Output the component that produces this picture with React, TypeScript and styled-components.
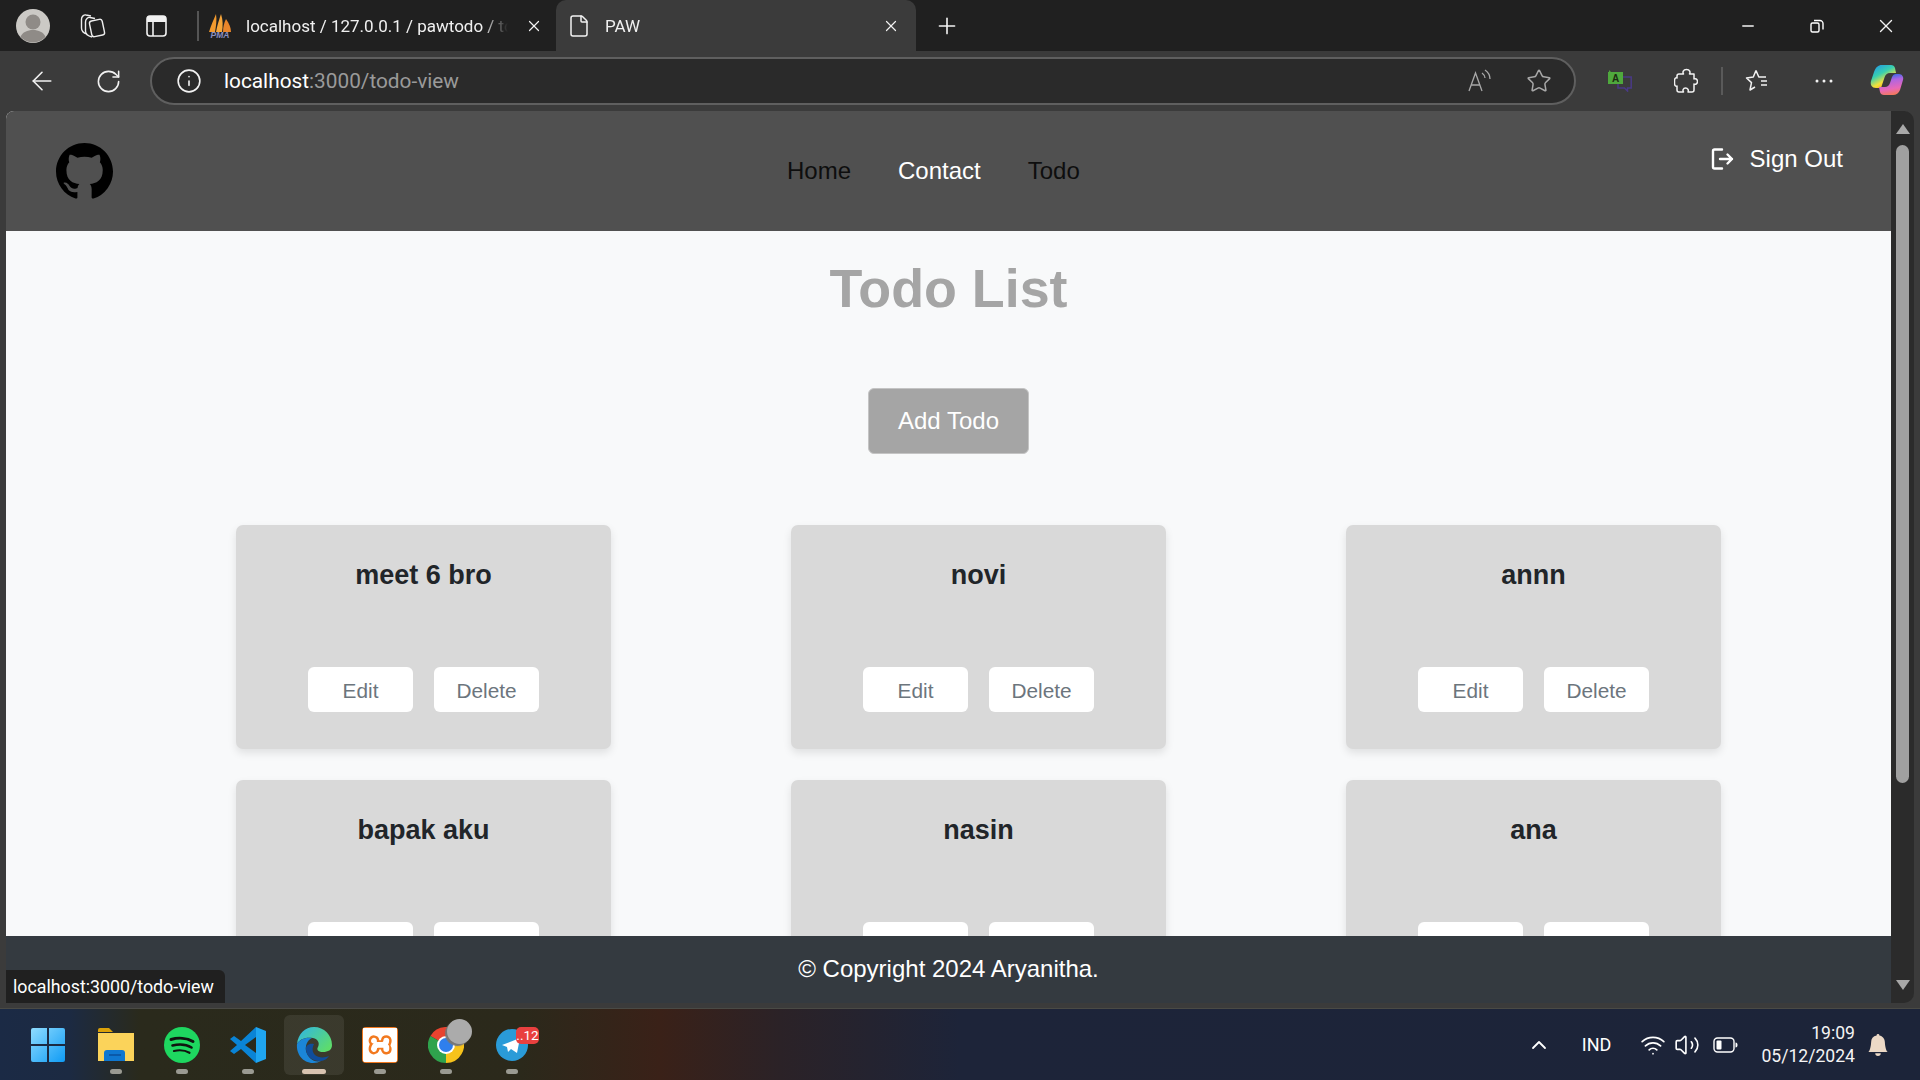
import React from "react";
import styled, { createGlobalStyle } from "styled-components";
import { ArrowLeft, ChevronUp, File, Info, Minus, Plus, RotateCw, Star, Volume2, Wifi, X } from "lucide-react";
import { BsBellFill, BsGithub } from "react-icons/bs";
import { SiXampp } from "react-icons/si";

const Global = createGlobalStyle`
  html, body { margin: 0; padding: 0; background: #202020; }
  * { box-sizing: border-box; }
`;

const UI = `Roboto, "Noto Sans", sans-serif`;
const WEB = `"Liberation Sans", Arial, sans-serif`;

const Frame = styled.div`
  width: 1920px;
  height: 1080px;
  overflow: hidden;
  display: flex;
  flex-direction: column;
  background: #3b3b3b;
  font-family: ${UI};
`;

const TabStrip = styled.div`
  height: 51px;
  flex: none;
  display: flex;
  align-items: center;
  background: #202020;
  color: #fff;
`;

const Slot = styled.div<{ $w: number }>`
  width: ${(p) => p.$w}px;
  height: 100%;
  flex: none;
  display: flex;
  align-items: center;
  justify-content: center;
  color: #f2f2f2;
`;

const StripDivider = styled.div`
  width: 2px;
  height: 30px;
  margin-left: 5px;
  flex: none;
  background: #555;
`;

const InactiveTab = styled.div`
  width: 357px;
  height: 100%;
  flex: none;
  display: flex;
  align-items: center;
  padding-left: 9px;
`;

const TabTitle = styled.span`
  font-size: 17px;
  color: #f0f0f0;
  white-space: nowrap;
  overflow: hidden;
  flex: none;
  -webkit-mask-image: linear-gradient(90deg, #000 90%, transparent 100%);
  mask-image: linear-gradient(90deg, #000 90%, transparent 100%);
`;

const InactiveTitle = styled(TabTitle)`
  width: 262px;
  margin: 0 15px 0 14px;
`;

const ActiveTab = styled.div`
  width: 360px;
  height: 100%;
  flex: none;
  display: flex;
  align-items: center;
  padding-left: 11px;
  background: #3b3b3b;
  border-radius: 10px 10px 0 0;
`;

const ActiveTitle = styled(TabTitle)`
  width: 275px;
  margin-left: 14px;
`;

const WindowControls = styled.div`
  margin-left: auto;
  height: 100%;
  display: flex;
`;

const Toolbar = styled.div`
  height: 60px;
  flex: none;
  display: flex;
  align-items: center;
  background: #3b3b3b;
`;

const AddressBar = styled.div`
  width: 1426px;
  height: 48px;
  margin-left: 18px;
  flex: none;
  display: flex;
  align-items: center;
  border: 2px solid #5f5f5f;
  border-radius: 24px;
  background: #2a2a2a;
  padding-left: 24px;
`;

const Url = styled.div`
  margin-left: 22px;
  font-size: 20.8px;
  color: #fff;
  span { color: #9a9a9a; }
`;

const AddressEnd = styled.div`
  margin-left: auto;
  height: 100%;
  display: flex;
  align-items: center;
  padding-right: 6px;
`;

const ToolDivider = styled.div`
  width: 2px;
  height: 28px;
  margin: 0 2px 0 14px;
  flex: none;
  background: #5a5a5a;
`;

const ViewportRow = styled.div`
  height: 892px;
  flex: none;
  display: flex;
  padding: 0 6px;
`;

const Page = styled.div`
  flex: 1;
  min-width: 0;
  position: relative;
  display: flex;
  flex-direction: column;
  background: #f8f9fa;
  font-family: ${WEB};
  border-top-left-radius: 8px;
  overflow: hidden;
`;

const Scrollbar = styled.div`
  width: 23px;
  flex: none;
  display: flex;
  flex-direction: column;
  align-items: center;
  background: #2b2b2b;
  border-radius: 0 10px 10px 0;
  padding: 13px 0 13px;
`;

const ScrollUp = styled.div`
  width: 0;
  height: 0;
  border-left: 7px solid transparent;
  border-right: 7px solid transparent;
  border-bottom: 10px solid #a8a8a8;
`;

const ScrollDown = styled.div`
  width: 0;
  height: 0;
  margin-top: auto;
  border-left: 7px solid transparent;
  border-right: 7px solid transparent;
  border-top: 10px solid #a8a8a8;
`;

const ScrollThumb = styled.div`
  width: 13px;
  height: 638px;
  margin-top: 11px;
  border-radius: 7px;
  background: #a0a0a0;
`;

const NavBar = styled.nav`
  height: 120px;
  flex: none;
  display: flex;
  align-items: center;
  padding: 0 48px 0 49px;
  background: #505050;
`;

const Logo = styled.div`
  width: 58px;
  height: 58px;
  flex: none;
  color: #000;
  display: flex;
  align-items: center;
  justify-content: center;
`;

const NavLinks = styled.div`
  margin-left: 674px;
  display: flex;
  gap: 47px;
`;

const NavLink = styled.a<{ $active?: boolean }>`
  font-size: 24px;
  line-height: 28px;
  color: ${(p) => (p.$active ? "#fff" : "#0e0e0e")};
`;

const SignOut = styled.div`
  margin-left: auto;
  align-self: flex-start;
  margin-top: 34px;
  display: flex;
  align-items: center;
  gap: 16px;
  font-size: 24px;
  line-height: 28px;
  color: #fff;
`;

const Content = styled.main`
  flex: 1;
  min-height: 0;
  overflow: hidden;
  display: flex;
  flex-direction: column;
  align-items: center;
  padding-top: 25px;
`;

const Heading = styled.h1`
  margin: 0 0 68px;
  font-size: 53.8px;
  line-height: 64px;
  font-weight: 700;
  color: #a5a5a5;
`;

const AddButton = styled.button`
  width: 161px;
  height: 66px;
  flex: none;
  margin-bottom: 71px;
  border: 1px solid #c4c4c4;
  border-radius: 6px;
  background: #a5a5a5;
  color: #fff;
  font-family: ${WEB};
  font-size: 24px;
`;

const CardGrid = styled.div`
  align-self: flex-start;
  margin-left: 230px;
  flex: none;
  display: grid;
  grid-template-columns: repeat(3, 375px);
  column-gap: 180px;
  row-gap: 31px;
`;

const Card = styled.article`
  height: 224px;
  display: flex;
  flex-direction: column;
  align-items: center;
  padding-top: 34px;
  background: #d9d9d9;
  border-radius: 7px;
  box-shadow: 0 4px 8px rgba(0, 0, 0, 0.1);
`;

const CardTitle = styled.h3`
  margin: 0;
  font-size: 27px;
  line-height: 32px;
  font-weight: 700;
  color: #212529;
`;

const CardActions = styled.div`
  margin-top: 76px;
  display: flex;
  gap: 21px;
`;

const CardButton = styled.button`
  width: 105px;
  height: 45px;
  border: none;
  border-radius: 6px;
  padding: 2px 0 0;
  background: #fff;
  color: #6c757d;
  font-family: ${WEB};
  font-size: 20.8px;
`;

const Footer = styled.footer`
  height: 67px;
  flex: none;
  display: flex;
  align-items: center;
  justify-content: center;
  padding-bottom: 2px;
  background: #343a40;
  color: #fff;
  font-size: 24px;
`;

const StatusBubble = styled.div`
  position: absolute;
  left: 0;
  bottom: 0;
  width: 219px;
  height: 33px;
  display: flex;
  align-items: center;
  padding-left: 7px;
  background: #202020;
  border-radius: 0 6px 0 0;
  color: #fff;
  font-family: ${UI};
  font-size: 17.8px;
`;

const BottomEdge = styled.div`
  height: 5px;
  flex: none;
  background: #3b3b3b;
`;

const Taskbar = styled.div`
  height: 72px;
  flex: none;
  display: flex;
  align-items: center;
  padding: 0 31px 0 17px;
  border-top: 1px solid #4a4a45;
  background: linear-gradient(90deg, #1b2a45 0, #1c2a42 70px, #2a2a1c 140px, #2b291b 520px, #3a2118 660px, #2b2227 780px, #1d2439 960px, #1c2439 100%);
`;

const TaskSlot = styled.div<{ $active?: boolean }>`
  width: 60px;
  height: 60px;
  margin: 0 3px;
  flex: none;
  position: relative;
  display: flex;
  align-items: center;
  justify-content: center;
  border-radius: 6px;
  background: ${(p) => (p.$active ? "rgba(255,255,255,0.08)" : "transparent")};
`;

const StartSlot = styled(TaskSlot)`
  padding-right: 4px;
`;

const Indicator = styled.div<{ $active?: boolean }>`
  position: absolute;
  left: 50%;
  bottom: 1px;
  width: ${(p) => (p.$active ? 24 : 12)}px;
  height: 5px;
  transform: translateX(-50%);
  border-radius: 3px;
  background: ${(p) => (p.$active ? "#d8c3b0" : "#9a9a92")};
`;

const GreyBlob = styled.div`
  position: absolute;
  left: 31px;
  top: 4px;
  width: 25px;
  height: 25px;
  border-radius: 50%;
  background: #ababab;
  box-shadow: -2px 2px 1px #777;
`;

const CountBadge = styled.div`
  position: absolute;
  left: 34px;
  top: 12px;
  width: 23px;
  height: 17px;
  display: flex;
  align-items: center;
  justify-content: center;
  border-radius: 5px;
  background: #e9403f;
  color: #fff;
  font-size: 13.5px;
`;

const Tray = styled.div`
  margin-left: auto;
  display: flex;
  align-items: center;
  color: #fff;
`;

const TrayIcon = styled.div<{ $left: number }>`
  margin-left: ${(p) => p.$left}px;
  display: flex;
  align-items: center;
`;

const TrayLang = styled.div`
  margin-left: 31px;
  font-size: 18px;
`;

const Clock = styled.div`
  margin-left: 23px;
  text-align: right;
  font-size: 17.6px;
  line-height: 23px;
  color: #f4f4f4;
`;

const Icon = styled.svg`
  display: block;
  flex: none;
`;

const Avatar = () => (
  <Icon width="34" height="34" viewBox="0 0 34 34">
    <circle cx="17" cy="17" r="17" fill="#cbc9c5" />
    <circle cx="17" cy="13" r="7.5" fill="#8f8b87" />
    <path d="M4.5 28c2-5 7-7 12.500-7s10.500 2 12.500 7a17 17 0 0 1-25 0z" fill="#8f8b87" />
  </Icon>
);

const Workspaces = () => (
  <Icon width="26" height="26" viewBox="0 0 26 26" fill="none" stroke="#eee" strokeWidth="1.4">
    <path d="M7 21C3 20 1.500 18 1.500 15V6C1.500 3.500 4 1.500 6 2l5 1" />
    <path d="M12 24C8 23 5.500 21 5.500 18V9C5.500 6 8 4 10 4.500l5 1" />
    <rect x="10.500" y="7" width="13" height="16" rx="2.500" transform="rotate(-12 17 15)" />
  </Icon>
);

const VerticalTabs = () => (
  <Icon width="21" height="22" viewBox="0 0 21 22">
    <rect x="1" y="1" width="19" height="20" rx="3" fill="none" stroke="#f2f2f2" strokeWidth="1.600" />
    <path d="M1 4a3 3 0 0 1 3-3h13a3 3 0 0 1 3 3v3H1z" fill="#f2f2f2" />
    <path d="M7 7v14" stroke="#f2f2f2" strokeWidth="1.600" />
  </Icon>
);

const PmaFavicon = () => (
  <Icon width="24" height="24" viewBox="0 0 24 24">
    <path d="M1 18C3 11 6 5 8 0c1 6 0 12-1 18z" fill="#f29a2e" />
    <path d="M8 18c1-6 3-12 5-18 2 6 2 12 1 18z" fill="#f7a63a" />
    <path d="M15 18c0-5 1-9 3-13 3 4 5 9 5 13z" fill="#e9852a" />
    <text x="12" y="23.500" textAnchor="middle" fontSize="8.500" fontWeight="700" fontStyle="italic" fontFamily="Liberation Sans" fill="#8a8fc0">PMA</text>
  </Icon>
);

const Restore = () => (
  <Icon width="16" height="16" viewBox="0 0 16 16" fill="none" stroke="#fff" strokeWidth="1.400">
    <rect x="2" y="5" width="8" height="9" rx="1.500" />
    <path d="M5 2.500h6a3 3 0 0 1 3 3v6" />
  </Icon>
);

const ReadAloud = () => (
  <Icon width="26" height="26" viewBox="0 0 26 26" fill="none" stroke="#a8a8a8" strokeWidth="1.300">
    <path d="M2 23 8.500 5 15 23M4.500 17h8" />
    <path d="M15 5c2 1.500 3 3 3 5M18 2c3 2 5 5 5 9" />
  </Icon>
);

const TranslateIcon = () => (
  <Icon width="24" height="22" viewBox="0 0 24 22">
    <path d="M10 7h13.200v11h-3.700v3l-3-3H10z" fill="none" stroke="#4a3a86" strokeWidth="1.500" />
    <path d="M0 2h1V0l2 2h12v12H0z" fill="#4fa83d" />
    <text x="7.500" y="12" textAnchor="middle" fontSize="10" fontWeight="700" fontFamily="Liberation Sans" fill="#1c2a12">A</text>
  </Icon>
);

const PuzzleIcon = () => (
  <Icon width="24" height="26" viewBox="0 0 24 26" fill="none" stroke="#f2f2f2" strokeWidth="1.500" strokeLinejoin="round">
    <path d="M5 6h4.500C8.500 4.500 9 1.500 12.500 1.500S16.500 4.500 15.500 6H20v5c1.200-.8 3.500 0 3.500 2.500S21.200 16.800 20 16v6c0 1-1 2-2 2h-4c.8-1.500 0-4-2.500-4S8.500 22.500 9.500 24H5c-1 0-2-1-2-2v-4c-1.200.8-2.500-.5-2.500-2.500v-3C.5 10.500 1.800 9.200 3 10V8c0-1 1-2 2-2z" />
  </Icon>
);

const FavStar = () => (
  <Icon width="26" height="26" viewBox="0 0 26 26" fill="none" stroke="#f2f2f2" strokeWidth="1.500" strokeLinejoin="round">
    <path d="M11 2.500 13.800 9H21M16 13h6M16 17h6M11 2.500 8.300 9 1.500 10l5 4.600L5 22l5-3" />
  </Icon>
);

const Dots = () => (
  <Icon width="20" height="4" viewBox="0 0 20 4" fill="#f2f2f2">
    <circle cx="3" cy="2" r="1.500" />
    <circle cx="10" cy="2" r="1.500" />
    <circle cx="17" cy="2" r="1.500" />
  </Icon>
);

const Copilot = () => (
  <Icon width="34" height="34" viewBox="0 0 34 34">
    <defs>
      <linearGradient id="cpA" x1="0" y1="0" x2="0.600" y2="1">
        <stop offset="0" stopColor="#1f8ff0" />
        <stop offset="0.450" stopColor="#38d0b0" />
        <stop offset="0.750" stopColor="#f3e13a" />
        <stop offset="1" stopColor="#f5a623" />
      </linearGradient>
      <linearGradient id="cpB" x1="0.400" y1="0" x2="0.600" y2="1">
        <stop offset="0" stopColor="#2a6bea" />
        <stop offset="0.300" stopColor="#b065e0" />
        <stop offset="0.700" stopColor="#e868b8" />
        <stop offset="1" stopColor="#f47a55" />
      </linearGradient>
    </defs>
    <path d="M12 1h9c2 0 3.500 1 4 3l1 5h-6c-3 0-4.500 1.500-5.500 4.500L11 24H6c-4 0-6-3-5-7l3-9c2-5 4-7 8-7z" fill="url(#cpA)" />
    <path d="M9 23h6c2.500 0 4-1.500 5-4l2-6c1-2 2-3 4-3h3c3 0 5 3 4 6l-3 10c-1 3-4 5-7 5H14c-2 0-3.500-1-4-3z" fill="url(#cpB)" />
  </Icon>
);

const SignOutIcon = () => (
  <Icon width="23" height="24" viewBox="0 0 23 24" fill="none" stroke="#fff" strokeWidth="2.400" strokeLinecap="round" strokeLinejoin="round">
    <path d="M11 2.500H3.500a1.500 1.500 0 0 0-1.500 1.500v16a1.500 1.500 0 0 0 1.500 1.500H11" />
    <path d="M9 12h12M16.500 7.500 21 12l-4.500 4.500" />
  </Icon>
);

const WindowsLogo = () => (
  <Icon width="36" height="36" viewBox="0 0 36 36">
    <defs>
      <linearGradient id="win" x1="0" y1="0" x2="1" y2="1">
        <stop offset="0" stopColor="#8fdcff" />
        <stop offset="1" stopColor="#0f9bf5" />
      </linearGradient>
    </defs>
    <path d="M1 3a2 2 0 0 1 2-2h14v16H1zM19 1h14a2 2 0 0 1 2 2v14H19zM1 19h16v16H3a2 2 0 0 1-2-2zM19 19h16v14a2 2 0 0 1-2 2H19z" fill="url(#win)" />
  </Icon>
);

const FolderIcon = () => (
  <Icon width="36" height="34" viewBox="0 0 36 34">
    <path d="M0 2a2 2 0 0 1 2-2h9l4 4H0z" fill="#dca20a" />
    <path d="M0 5h36v28H0z" fill="#fbd35a" />
    <path d="M6 33V25a3 3 0 0 1 3-3h15a3 3 0 0 1 3 3v8z" fill="#0f77d0" />
    <path d="M11 27h12" stroke="#0a4f9c" strokeWidth="1.500" />
  </Icon>
);

const SpotifyIcon = () => (
  <Icon width="36" height="36" viewBox="0 0 36 36" fill="none" stroke="#10130f" strokeLinecap="round">
    <circle cx="18" cy="18" r="18" fill="#1ed760" stroke="none" />
    <path d="M7 12.500c7-2 16-1.500 22 2" strokeWidth="3" />
    <path d="M8.500 18.500c6-1.500 14-1 19 2" strokeWidth="2.600" />
    <path d="M10 24c5-1.200 11-.8 15.500 1.800" strokeWidth="2.200" />
  </Icon>
);

const VsCodeIcon = () => (
  <Icon width="36" height="36" viewBox="0 0 36 36">
    <path d="M26 0 11 14 4 9 0 12l7 6-7 6 4 3 7-5 15 14V26L15 18l11-8z" fill="#0a84d6" />
    <path d="M26 0l10 4v28l-10 4z" fill="#1fa5f0" />
  </Icon>
);

const EdgeIcon = () => (
  <Icon width="36" height="36" viewBox="0 0 36 36">
    <defs>
      <linearGradient id="edgeTop" x1="0" y1="0" x2="1" y2="0.700">
        <stop offset="0" stopColor="#2fb4e8" />
        <stop offset="1" stopColor="#5ddc6c" />
      </linearGradient>
    </defs>
    <path d="M1 17C2 7 9 0 18 0c10 0 18 8 18 18 0 5-4 7-9 7-4 0-7-2-5-5 2-4 0-8-5-9-8-1-13 1-16 6z" fill="url(#edgeTop)" />
    <path d="M1 17c3-5 9-7 15-6-5 2-7 8-6 13 2 7 8 12 15 10-2 1-5 2-8 2C7 36 0 27 1 17z" fill="#1b86d8" />
    <path d="M10 23c1 7 7 11 13 11 5 0 8-2 10-5-4 2-11 2-14-1-3-3-3-7-1-11-5-1-9 2-8 6z" fill="#0f4d9a" />
  </Icon>
);

const XamppTile = styled.div`
  width: 36px;
  height: 36px;
  flex: none;
  display: flex;
  align-items: center;
  justify-content: center;
  border-radius: 4px;
  background: #f2791f;
`;

const ChromeIcon = () => (
  <Icon width="36" height="36" viewBox="0 0 36 36">
    <path d="M18 18 2.400 9A18 18 0 0 1 33.600 9z" fill="#e8432f" />
    <path d="M18 18 33.600 9A18 18 0 0 1 18 36z" fill="#f7c31b" />
    <path d="M18 18 18 36A18 18 0 0 1 2.400 9z" fill="#2fa34d" />
    <circle cx="18" cy="18" r="9" fill="#fff" />
    <circle cx="18" cy="18" r="7" fill="#2f7fed" />
  </Icon>
);

const TelegramIcon = () => (
  <Icon width="32" height="32" viewBox="0 0 32 32">
    <circle cx="16" cy="16" r="16" fill="#2a9bd8" />
    <path d="M6 16 24 9l-3 15-6-4-3 3-1-5z" fill="#fff" />
  </Icon>
);

const BatteryIcon = () => (
  <Icon width="25" height="16" viewBox="0 0 25 16">
    <rect x="1" y="1" width="20" height="14" rx="3.500" fill="none" stroke="#fff" strokeWidth="1.400" />
    <rect x="3.500" y="3.500" width="5" height="9" rx="1" fill="#fff" />
    <path d="M22.500 5.500c1.500 0 2 1 2 2.500s-.5 2.500-2 2.500z" fill="#fff" />
  </Icon>
);

const todos = ["meet 6 bro", "novi", "annn", "bapak aku", "nasin", "ana"];

export default function App() {
  return (
    <Frame>
      <Global />
      <TabStrip>
        <Slot $w={66}><Avatar /></Slot>
        <Slot $w={54}><Workspaces /></Slot>
        <Slot $w={72}><VerticalTabs /></Slot>
        <StripDivider />
        <InactiveTab>
          <PmaFavicon />
          <InactiveTitle>localhost / 127.0.0.1 / pawtodo / todos</InactiveTitle>
          <Slot $w={22}><X size={18} strokeWidth={1.6} /></Slot>
        </InactiveTab>
        <ActiveTab>
          <File size={24} strokeWidth={1.5} color="#f2f2f2" />
          <ActiveTitle>PAW</ActiveTitle>
          <Slot $w={22}><X size={18} strokeWidth={1.6} /></Slot>
        </ActiveTab>
        <Slot $w={62}><Plus size={26} strokeWidth={1.5} /></Slot>
        <WindowControls>
          <Slot $w={69}><Minus size={18} strokeWidth={1.8} /></Slot>
          <Slot $w={69}><Restore /></Slot>
          <Slot $w={69}><X size={22} strokeWidth={1.5} /></Slot>
        </WindowControls>
      </TabStrip>
      <Toolbar>
        <Slot $w={84}><ArrowLeft size={30} strokeWidth={1.3} /></Slot>
        <Slot $w={48}><RotateCw size={27} strokeWidth={1.4} /></Slot>
        <AddressBar>
          <Info size={26} strokeWidth={1.5} color="#f2f2f2" />
          <Url>localhost<span>:3000/todo-view</span></Url>
          <AddressEnd>
            <Slot $w={60}><ReadAloud /></Slot>
            <Slot $w={58}><Star size={26} strokeWidth={1.4} color="#a8a8a8" /></Slot>
          </AddressEnd>
        </AddressBar>
        <Slot $w={88}><TranslateIcon /></Slot>
        <Slot $w={43}><PuzzleIcon /></Slot>
        <ToolDivider />
        <Slot $w={66}><FavStar /></Slot>
        <Slot $w={66}><Dots /></Slot>
        <Slot $w={60}><Copilot /></Slot>
      </Toolbar>
      <ViewportRow>
        <Page>
          <NavBar>
            <Logo><BsGithub size={57} /></Logo>
            <NavLinks>
              <NavLink>Home</NavLink>
              <NavLink $active>Contact</NavLink>
              <NavLink>Todo</NavLink>
            </NavLinks>
            <SignOut>
              <SignOutIcon />
              <span>Sign Out</span>
            </SignOut>
          </NavBar>
          <Content>
            <Heading>Todo List</Heading>
            <AddButton>Add Todo</AddButton>
            <CardGrid>
              {todos.map((t) => (
                <Card key={t}>
                  <CardTitle>{t}</CardTitle>
                  <CardActions>
                    <CardButton>Edit</CardButton>
                    <CardButton>Delete</CardButton>
                  </CardActions>
                </Card>
              ))}
            </CardGrid>
          </Content>
          <Footer>© Copyright 2024 Aryanitha.</Footer>
          <StatusBubble>localhost:3000/todo-view</StatusBubble>
        </Page>
        <Scrollbar>
          <ScrollUp />
          <ScrollThumb />
          <ScrollDown />
        </Scrollbar>
      </ViewportRow>
      <BottomEdge />
      <Taskbar>
        <StartSlot><WindowsLogo /></StartSlot>
        <TaskSlot><FolderIcon /><Indicator /></TaskSlot>
        <TaskSlot><SpotifyIcon /><Indicator /></TaskSlot>
        <TaskSlot><VsCodeIcon /><Indicator /></TaskSlot>
        <TaskSlot $active><EdgeIcon /><Indicator $active /></TaskSlot>
        <TaskSlot><XamppTile><SiXampp size={34} color="#fff" stroke="#fff" strokeWidth={1.2} /></XamppTile><Indicator /></TaskSlot>
        <TaskSlot><ChromeIcon /><GreyBlob /><Indicator /></TaskSlot>
        <TaskSlot><TelegramIcon /><CountBadge>..12</CountBadge><Indicator /></TaskSlot>
        <Tray>
          <ChevronUp size={24} strokeWidth={1.8} />
          <TrayLang>IND</TrayLang>
          <TrayIcon $left={29}><Wifi size={26} strokeWidth={1.6} /></TrayIcon>
          <TrayIcon $left={8}><Volume2 size={26} strokeWidth={1.5} /></TrayIcon>
          <TrayIcon $left={13}><BatteryIcon /></TrayIcon>
          <Clock>19:09<br />05/12/2024</Clock>
          <TrayIcon $left={12}><BsBellFill size={22} color="#ecd9c6" /></TrayIcon>
        </Tray>
      </Taskbar>
    </Frame>
  );
}
